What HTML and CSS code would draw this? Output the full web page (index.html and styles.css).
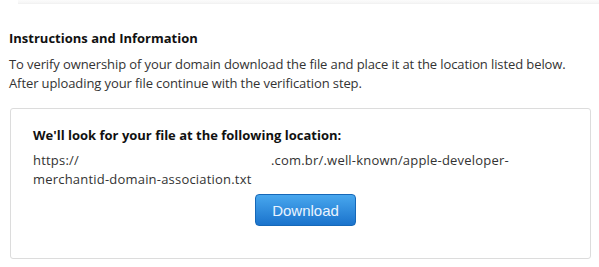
FILE: index.html
```html
<!DOCTYPE html>
<html>
<head>
<meta charset="utf-8">
<link rel="stylesheet" href="styles.css">
</head>
<body>
<div class="topbar"></div>
<section class="section">
  <h2 class="title">Instructions and Information</h2>
  <p class="intro">To verify ownership of your domain download the file and place it at the location listed below. After uploading your file continue with the verification step.</p>
  <div class="box">
    <h3 class="box-title">We'll look for your file at the following location:</h3>
    <p class="url"><span>https://</span><span class="redacted"></span><span>.com.br/.well-known/apple-developer-</span><br><span>merchantid-domain-association.txt</span></p>
    <div class="actions"><button class="btn">Download</button></div>
  </div>
</section>
</body>
</html>
```
FILE: styles.css
```css
html, body { margin: 0; padding: 0; background: #fff; }
body { font-family: "Open Sans", "DejaVu Sans", sans-serif; color: #333; width: 599px; height: 267px; overflow: hidden; }
.topbar { height: 3px; margin: 0 0 0 18px; background: linear-gradient(to bottom, #fbfbfb, #f2f2f2); border-bottom: 1px solid #ededed; opacity: 0.7; }
.section { padding: 25px 8px 0 9px; }
.title { margin: 0; font-size: 13px; font-weight: 700; color: #111; line-height: 18px; }
.intro { margin: 8px 0 0; font-size: 13px; line-height: 19px; color: #333; letter-spacing: -0.1px; }
.box { margin: 15px 0 0 1px; border: 1px solid #dcdcdc; border-radius: 3px; padding: 17px 22px 0; height: 151px; box-sizing: border-box; }
.box-title { margin: 0; font-size: 13px; font-weight: 700; color: #111; line-height: 18px; }
.url { margin: 7px 0 0; font-size: 13px; line-height: 19px; color: #333; letter-spacing: 0.2px; }
.redacted { display: inline-block; width: 192px; }
.actions { display: flex; justify-content: center; margin-top: 5px; padding-left: 10px; }
.btn { width: 101px; height: 32px; border: 1px solid #1668b8; border-radius: 4px; background: linear-gradient(to bottom, #48a7ee, #1b73cc); color: #eaf4ff; font-family: "Liberation Sans", Arial, sans-serif; font-size: 15px; padding: 0; }
```
